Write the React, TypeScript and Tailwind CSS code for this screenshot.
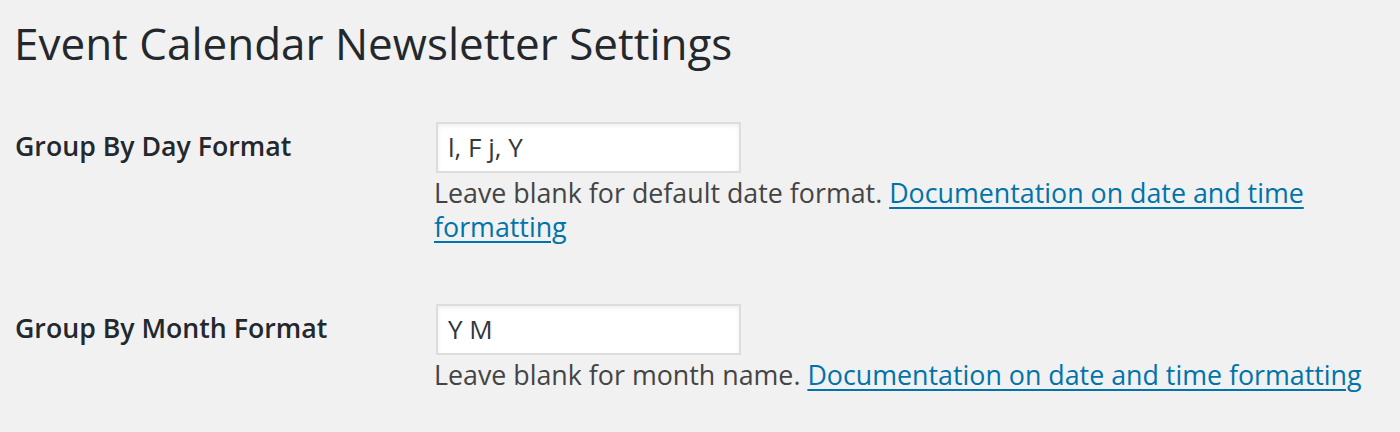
import React from 'react';

const font = { fontFamily: '"Open Sans", "Noto Sans", sans-serif' };

const Row: React.FC<{ label: string; value: string; hint: string; first?: boolean }> = ({ label, value, hint, first }) => (
  <div className={`grid grid-cols-[421px_1fr] ${first ? 'pt-[48px]' : 'pt-[60px]'}`}>
    <div className="pt-[6px] text-[26.7px] font-semibold text-[#23282d] leading-[36px] pl-[15px]">{label}</div>
    <div className="pr-[10px]">
      <div className="ml-[15px] w-[305px] h-[51px] bg-white border-2 border-[#dddddd] shadow-[inset_0_2px_4px_rgba(0,0,0,0.07)] flex items-center px-[10px] text-[26px] text-[#32373c]">
        {value}
      </div>
      <p className="ml-[13px] mt-[3px] text-[26.8px] leading-[34px] text-[#444444]">
        {hint}{' '}
        <a href="#" className="text-[#0073aa] underline decoration-2 underline-offset-[4px]">
          Documentation on date and time formatting
        </a>
      </p>
    </div>
  </div>
);

export default function App() {
  return (
    <div className="w-[1400px] h-[432px] bg-[#f1f1f1] overflow-hidden" style={font}>
      <h1 className="pl-[14px] pt-[12px] text-[44px] leading-[62px] font-normal text-[#23282d]">
        Event Calendar Newsletter Settings
      </h1>
      <Row first label="Group By Day Format" value="l, F j, Y" hint="Leave blank for default date format." />
      <Row label="Group By Month Format" value="Y M" hint="Leave blank for month name." />
    </div>
  );
}
